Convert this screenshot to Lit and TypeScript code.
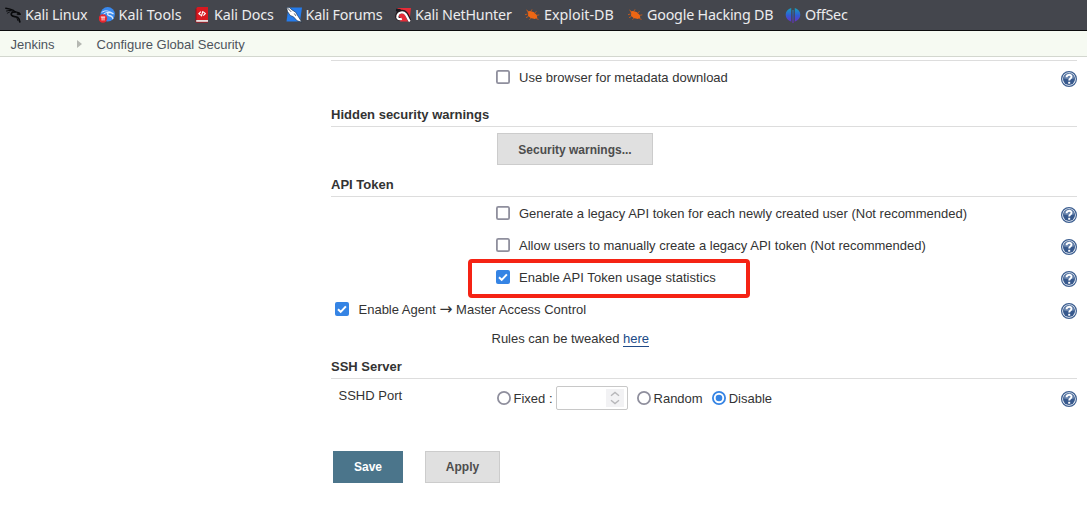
import { LitElement, html, css, svg } from "lit";
import { customElement, property } from "lit/decorators.js";

const icons: Record<string, unknown> = {
  dragon: svg`<g fill="none" stroke="#08090b" stroke-linecap="round" stroke-linejoin="round"><path d="M.8 1.2 5 2.1 8.5 3.4 10.2 5" stroke-width="1.4"/><path d="M1.5 4 5 3.4 8 4.4" stroke-width="1"/><path d="M2.3 6.2 5 4.8" stroke-width=".8"/><path d="M9.5 5C6.5 5.2 5.7 6.5 6.5 8.2c.9 1.9 4 1 6.2 2.3 1.6 1 1.9 2.6 2.1 4.3" stroke-width="1.7"/><path d="M10 4.7 14 5.8 15.3 7.3 12.3 7" stroke-width="1.3"/><path d="M12 11.5 13 13.7" stroke-width=".9"/></g>`,
  tools: svg`<circle cx="8.7" cy="7.3" r="7.2" fill="#3989ee"/><g fill="none" stroke="#dceafe" stroke-linecap="round"><path d="M3 5.2C6 3 9 3.7 11 5.1M4.5 7.3C7 5.1 9 5.2 11 5.8" stroke-width="1"/><path d="M11 5.4C8 5.6 7.9 8 10 8.5c2.3.3 3.5 1 3.8 3M11 5.2l3 1.5" stroke-width="1.3"/></g><circle cx="3.9" cy="11.5" r="4.2" fill="#e5262f"/><path d="M1.8 10h4.4M3.1 10v3.5M5 10v3.5" stroke="#fff" stroke-width=".9"/>`,
  docs: svg`<path d="M2 1.4 3.5 0H14v13H2z" fill="#d71920"/><path d="M2 1.5V15" stroke="#8d1019"/><path d="M2.2 13H14v2H2.2z" fill="#e8dfdf"/><path d="M2 15.3h12" stroke="#b51620" stroke-width=".8"/><path d="m6.9 4.7-2 2 2 1.7M9.3 4.9l2 1.7-2 2M8.9 4.2 7.4 9.3" fill="none" stroke="#fff" stroke-width="1.2"/>`,
  forums: svg`<path d="M2.4.5H16L14 14.5H.5z" fill="#257bea"/><path d="M.4.3 3.2.4 6 2.9 9.6 5.2l1.8 3 4.4 6.9-4.6-1.3L7.5 9.8 4.2 8.4 1.6 4.6z" fill="#fff" stroke="#182b43" stroke-width=".6"/><path d="m1 .5 4.2 4.4M8.3 6.5l1.6 2.4" stroke="#172132" stroke-width=".7"/>`,
  nethunter: svg`<path d="M2.5 1H16l-1.6 13.5H5z" fill="#e52c38"/><path d="M1.2 1.8 6 2 3.5 5.5.8 4z" fill="#17191e"/><path d="M5.5 12C2.2 12.5 1.3 10 2.5 7.3 4 4.2 8.5 3.5 11 6.4c1.9 2.1 2.2 4.8 4 8" fill="none" stroke="#25191e" stroke-width="3.6"/><path d="M6.8 11.7C3.5 13 1.7 11.4 2.5 8.6 3.5 5.2 8.2 4.2 10.5 7c1.8 2.2 2.3 5 4.3 7.5" fill="none" stroke="#fff" stroke-width="2.2"/>`,
  bug: svg`<path d="M2.9 4.5 6 3.9l3.6 1 3.2 3 .5 2.8-2.5 1.2-4.2-.8L4 8.8 4.2 6z" fill="#ed6614"/><path d="m4 4-1.7-1M7 4l1-1.6M10.5 6l2-1.5M13 8.3l2.3-.5M3.5 7 1 7.7M4.5 9.4 2 10.7M7 11.2 5.5 12.7M12 11.4l2.5 1" fill="none" stroke="#c95a18" stroke-width=".9"/>`,
  offsec: svg`<defs><linearGradient id="og" gradientUnits="userSpaceOnUse" x1="0" y1="1" x2="0" y2="16"><stop offset="0" stop-color="#16a1bd"/><stop offset=".5" stop-color="#315bd4"/><stop offset="1" stop-color="#702bc3"/></linearGradient></defs><path d="M6.2 1v13.7C3 13.6.7 11 .7 7.6S3 2 6.2 1M9.8 1v13.7c3.2-1.1 5.5-3.7 5.5-7.1S13 2 9.8 1M7.5 3h1v13h-1z" fill="url(#og)"/>`,
};

@customElement("help-icon")
class HelpIcon extends LitElement {
  static styles = css`:host{display:block;width:16px;height:16px}svg{display:block}`;
  render() {
    return html`<svg width="16" height="16" viewBox="0 0 16 16"><circle cx="8" cy="8" r="7.4" fill="#f5f8fc" stroke="#3c5e90" stroke-width="1.2"/><circle cx="8" cy="8" r="6" fill="#37598d"/><path d="M2.6 7.5a5.4 5.4 0 0 1 10.8 0Q8 9 2.6 7.5" fill="#6783ac"/><path d="M5.6 6.2C5.5 3.2 10.5 3 10.5 5.8c0 1.8-2.3 1.8-2.3 3.7" fill="none" stroke="#fff" stroke-width="1.9"/><path d="M7.2 10.8h2v1.9h-2z" fill="#fff"/></svg>`;
  }
}

@customElement("choice-mark")
class ChoiceMark extends LitElement {
  @property() kind = "checkbox";
  @property({ type: Boolean }) checked = false;
  static styles = css`:host{display:block;width:14px;height:14px;flex:none}svg{display:block}`;
  render() {
    const c = this.checked;
    return html`<svg width="14" height="14" viewBox="0 0 14 14">${
      this.kind === "radio"
        ? svg`<circle cx="7" cy="7" r="6.1" fill="#fff" stroke=${c ? "#3584e4" : "#8f8f9d"} stroke-width="1.8"/>${c ? svg`<circle cx="7" cy="7" r="3.3" fill="#3584e4"/>` : ""}`
        : c
          ? svg`<rect width="14" height="14" rx="2" fill="#3584e4"/><path d="m3 7.2 2.7 2.7 5.2-5.5" fill="none" stroke="#fff" stroke-width="2"/>`
          : svg`<rect x=".9" y=".9" width="12.2" height="12.2" rx="1.4" fill="#fff" stroke="#8f8f9d" stroke-width="1.8"/>`
    }</svg>`;
  }
}

@customElement("app-root")
class AppRoot extends LitElement {
  static styles = css`
    :host{display:block;width:1087px;height:527px;overflow:hidden;background:#fff;color:#333;font:13px/16px "Liberation Sans",Arial,sans-serif}
    *,*::after{box-sizing:border-box}
    .bookmarks{height:31px;background:#44464d;border-bottom:1px solid #0c0c0d;display:flex;align-items:center;padding-left:5px;color:#ececee;font:14.3px/20px "Noto Sans",sans-serif;letter-spacing:-.2px}
    .bookmark{display:flex;align-items:center;gap:4px;flex:none;white-space:nowrap}
    .bookmark svg{flex:none}
    .bookmark span{padding-bottom:1px}
    .w0{width:93.5px}.w1{width:95.5px;letter-spacing:.05px}.w2{width:91.5px;letter-spacing:-.1px}.w3{width:109.5px}.w4{width:129px}.w5{width:103px;letter-spacing:0}.w6{width:158px}
    .crumbs{height:26px;background:#f6faf2;border-bottom:1px solid #d3d7cf;display:flex;align-items:center;padding-left:10.5px;color:#4d545d}
    .crumbs span{padding-top:2px}
    .arrow{width:5px;height:8px;margin:0 15px 0 22px}
    .main{margin:3px 10px 0 331px;border-top:1px solid #ddd;display:flex;flex-direction:column}
    .row{height:32px;display:flex;align-items:center;padding-left:165px;white-space:nowrap}
    .row.outer{padding-left:4px}
    .row choice-mark{margin-right:9px}
    .row span,.port span{padding-top:2px}
    .row help-icon{margin:4px 0 0 auto}
    .marked span{letter-spacing:.06px}
    .outer span{padding-left:.5px}
    .outer b{font:15.5px/12px "DejaVu Sans",sans-serif;display:inline-block;width:13px}
    h2{margin:0;height:25px;border-bottom:1px solid #ddd;font:bold 13px/26px "Liberation Sans",Arial,sans-serif;color:#333}
    .first{margin-top:9px}
    .warning{height:45px;padding:6px 0 0 166px}
    button{height:32px;padding:1px 0 0;border:1px solid #ccc;border-radius:0;background:#e0e0e0;color:#4d4d4d;font:bold 12px/16px "Liberation Sans",Arial,sans-serif}
    .wide{width:156px}
    .marked{position:relative}
    .marked::after{content:"";position:absolute;left:137px;top:-2px;width:282px;height:39px;border:4px solid #f52314;border-radius:4px}
    .rules{height:29px;padding:6px 0 0 160.5px}
    a{color:#204a87;text-decoration:none;border-bottom:1px solid #204a87}
    .port{height:38px;display:flex;align-items:center;padding-left:7.5px}
    .label{width:158.5px;margin-top:-6px}
    .port choice-mark{margin-right:2.5px}
    .number{width:72px;height:24px;border:1px solid #c8c8c8;border-radius:2px;margin:0 9px 0 3.5px;padding:2px 3px;display:flex;justify-content:flex-end}
    .disable{margin-left:9.5px}
    .port help-icon{margin:1px 0 0 auto}
    .actions{display:flex;gap:22px;padding:34px 0 0 2px}
    .actions button{padding-top:0}
    .save{width:70px;background:#4b758b;border-color:#4b758b;color:#fff}
    .apply{width:75px}
  `;
  private option(text: unknown, checked = false, extra = "") {
    return html`<div class="row ${extra}"><choice-mark ?checked=${checked}></choice-mark><span>${text}</span><help-icon></help-icon></div>`;
  }
  render() {
    const links = [["dragon", "Kali Linux"], ["tools", "Kali Tools"], ["docs", "Kali Docs"], ["forums", "Kali Forums"], ["nethunter", "Kali NetHunter"], ["bug", "Exploit-DB"], ["bug", "Google Hacking DB"], ["offsec", "OffSec"]];
    return html`
      <nav class="bookmarks">${links.map(([i, t], n) => html`<div class="bookmark w${n}"><svg width="16" height="16" viewBox="0 0 16 16">${icons[i]}</svg><span>${t}</span></div>`)}</nav>
      <nav class="crumbs"><span>Jenkins</span><svg class="arrow" viewBox="0 0 5 8"><path d="M0 0 5 4 0 8z" fill="#b5b8b2"/></svg><span>Configure Global Security</span></nav>
      <main class="main">
        ${this.option("Use browser for metadata download")}
        <h2 class="first">Hidden security warnings</h2>
        <div class="warning"><button class="wide">Security warnings...</button></div>
        <h2>API Token</h2>
        ${this.option("Generate a legacy API token for each newly created user (Not recommended)")}
        ${this.option("Allow users to manually create a legacy API token (Not recommended)")}
        ${this.option("Enable API Token usage statistics", true, "marked")}
        ${this.option(html`Enable Agent <b>→</b> Master Access Control`, true, "outer")}
        <div class="rules">Rules can be tweaked <a>here</a></div>
        <h2>SSH Server</h2>
        <div class="port"><span class="label">SSHD Port</span><choice-mark kind="radio"></choice-mark><span>Fixed :</span>
          <div class="number"><svg width="18" height="18" viewBox="0 0 18 18"><path d="M0 0h18v18H0z" fill="#f2f2f4"/><path d="m5 6.8 4-3.3 4 3.3M5 11.2l4 3.3 4-3.3" fill="none" stroke="#b7b7ba" stroke-width="1.4"/></svg></div>
          <choice-mark kind="radio"></choice-mark><span>Random</span><choice-mark class="disable" kind="radio" checked></choice-mark><span>Disable</span><help-icon></help-icon></div>
        <div class="actions"><button class="save">Save</button><button class="apply">Apply</button></div>
      </main>`;
  }
}
